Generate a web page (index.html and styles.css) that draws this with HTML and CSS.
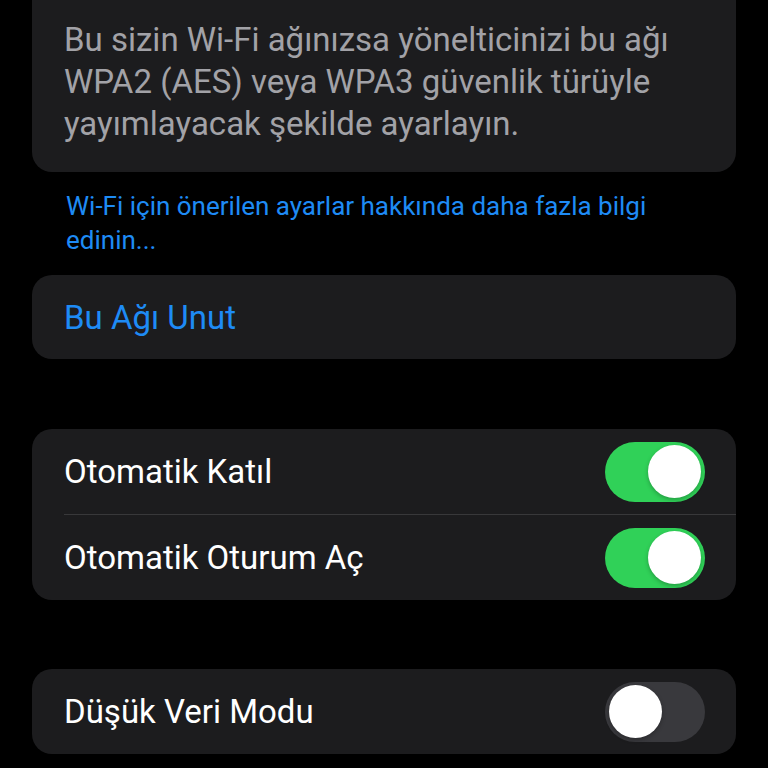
FILE: index.html
```html
<!DOCTYPE html>
<html lang="tr">
<head>
<meta charset="utf-8">
<link rel="stylesheet" href="styles.css">
</head>
<body>
<div class="page">
  <div class="card card-top">
    <p class="info">Bu sizin Wi-Fi ağınızsa yönelticinizi bu ağı WPA2 (AES) veya WPA3 güvenlik türüyle yayımlayacak şekilde ayarlayın.</p>
  </div>
  <p class="footer-link">Wi-Fi için önerilen ayarlar hakkında daha fazla bilgi edinin...</p>
  <div class="card card-forget">
    <div class="row"><span class="label blue">Bu Ağı Unut</span></div>
  </div>
  <div class="card card-auto">
    <div class="row">
      <span class="label">Otomatik Katıl</span>
      <span class="switch on"><span class="knob"></span></span>
    </div>
    <div class="sep"></div>
    <div class="row">
      <span class="label">Otomatik Oturum Aç</span>
      <span class="switch on"><span class="knob"></span></span>
    </div>
  </div>
  <div class="card card-low">
    <div class="row">
      <span class="label">Düşük Veri Modu</span>
      <span class="switch"><span class="knob"></span></span>
    </div>
  </div>
</div>
</body>
</html>
```
FILE: styles.css
```css
html, body {
  margin: 0;
  padding: 0;
  background: #000;
}
body {
  font-family: Roboto, "Liberation Sans", sans-serif;
  color: #fff;
  width: 768px;
  height: 768px;
  overflow: hidden;
}
.page {
  padding: 0 32px;
  display: flex;
  flex-direction: column;
}
.card {
  background: #1c1c1e;
  border-radius: 20px;
}
.card-top {
  border-radius: 0 0 20px 20px;
  padding: 19px 32px 27px 32px;
}
.info {
  margin: 0;
  font-size: 33px;
  line-height: 42px;
  color: #a2a2a7;
}
.footer-link {
  margin: 17px 0 18px 0;
  padding: 0 32px 0 34px;
  font-size: 26px;
  line-height: 34px;
  color: #1e8bf5;
}
.row {
  height: 85px;
  padding: 0 31px 0 32px;
  display: flex;
  align-items: center;
  justify-content: space-between;
}
.card-forget .row {
  height: 84px;
}
.label {
  font-size: 33px;
  color: #fff;
}
.label.blue {
  color: #1e8bf5;
}
.card-auto {
  margin-top: 70px;
}
.card-low {
  margin-top: 69px;
}
.sep {
  height: 1px;
  margin-left: 32px;
  background: #38383a;
}
.switch {
  width: 100px;
  height: 60px;
  border-radius: 30px;
  background: #39393d;
  display: flex;
  align-items: center;
  padding: 0 4px;
  box-sizing: border-box;
}
.switch.on {
  background: #30d158;
  justify-content: flex-end;
}
.knob {
  width: 53px;
  height: 53px;
  border-radius: 50%;
  background: #fff;
  box-shadow: 0 2px 4px rgba(0,0,0,0.25);
}
```
